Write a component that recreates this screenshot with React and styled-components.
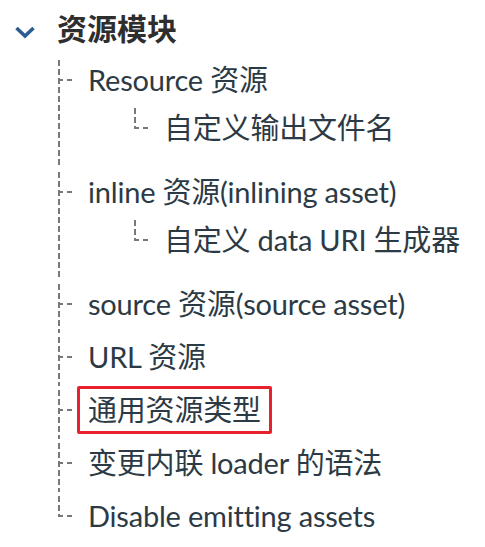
import React from "react";
import styled, { createGlobalStyle } from "styled-components";

const GlobalStyle = createGlobalStyle`
  body {
    margin: 0;
    background: #fff;
    font-family: Lato, "Noto Sans CJK SC", "Noto Sans", sans-serif;
  }
`;

const Panel = styled.nav`
  padding: 3px 0 0 13px;
`;

const Heading = styled.div`
  display: flex;
  align-items: center;
  gap: 20px;
  height: 48px;
  padding-bottom: 5px;
  font-size: 30px;
  font-weight: 700;
  color: #2e2e2e;
`;

const Chevron = styled.svg`
  width: 24px;
  height: 24px;
  margin-top: 9px;
  flex-shrink: 0;
`;

const List = styled.ul`
  list-style: none;
  margin: 0;
  padding: 0 0 ${(props) => (props.nested ? "11px" : "0")}
    ${(props) => (props.nested ? "76px" : "64px")};
`;

const Item = styled.li`
  position: relative;
  padding-bottom: 5px;

  &:last-child {
    padding-bottom: 0;
  }

  &::before {
    content: "";
    position: absolute;
    left: -19px;
    top: 4px;
    bottom: 0;
    width: 2px;
    background: repeating-linear-gradient(
      to bottom,
      #787878 0 6px,
      transparent 6px 9px
    );
  }

  &:last-child::before {
    bottom: auto;
    height: 21px;
  }

  &::after {
    content: "";
    position: absolute;
    left: -19px;
    top: 23px;
    width: 15px;
    height: 2px;
    background: repeating-linear-gradient(
      to right,
      #787878 0 5px,
      transparent 5px 9px
    );
  }
`;

const Label = styled.span`
  display: inline-block;
  box-sizing: border-box;
  height: 48px;
  line-height: 42px;
  padding: 0 8px;
  border: 3px solid ${(props) => (props.active ? "#e8222c" : "transparent")};
  border-radius: 2px;
  font-size: 29px;
  letter-spacing: -0.2px;
  color: #2c3a45;
  white-space: nowrap;
`;

const items = [
  { label: "Resource 资源", children: ["自定义输出文件名"] },
  { label: "inline 资源(inlining asset)", children: ["自定义 data URI 生成器"] },
  { label: "source 资源(source asset)" },
  { label: "URL 资源" },
  { label: "通用资源类型", active: true },
  { label: "变更内联 loader 的语法" },
  { label: "Disable emitting assets" },
];

const App = () => {
  return (
    <>
      <GlobalStyle />
      <Panel>
        <Heading>
          <Chevron viewBox="0 0 24 24">
            <polyline
              points="3.5,8 12,16 20.5,8"
              fill="none"
              stroke="#2b5d94"
              strokeWidth="3.6"
            />
          </Chevron>
          资源模块
        </Heading>
        <List>
          {items.map((item) => {
            return (
              <Item key={item.label}>
                <Label active={item.active}>{item.label}</Label>
                {item.children && (
                  <List nested>
                    {item.children.map((child) => {
                      return (
                        <Item key={child}>
                          <Label>{child}</Label>
                        </Item>
                      );
                    })}
                  </List>
                )}
              </Item>
            );
          })}
        </List>
      </Panel>
    </>
  );
};

export default App;
